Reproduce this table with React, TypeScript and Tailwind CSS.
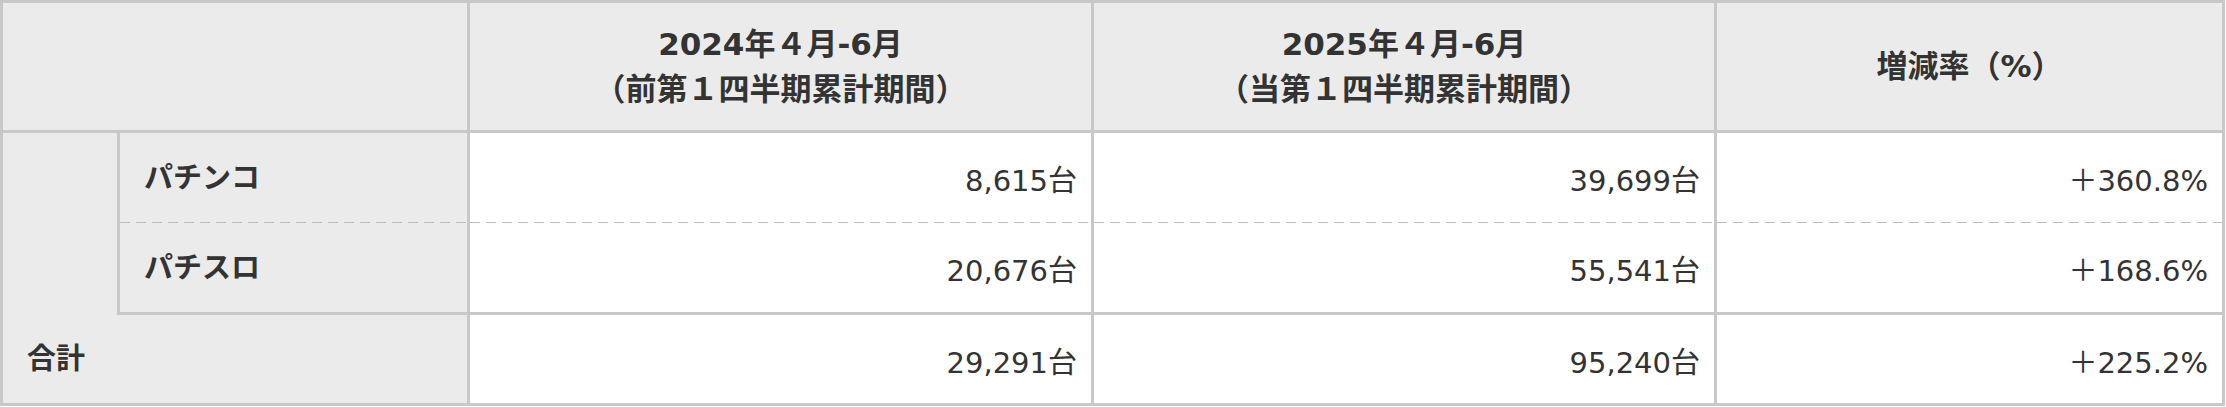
import React from "react";

const headCell =
  "flex flex-col items-center justify-center bg-[#ebebeb] border-r-[3px] border-b-[3px] border-[#c8c8c8] font-bold text-[31px] leading-[45px]";
const labelCell =
  "flex items-center bg-[#ebebeb] border-r-[3px] border-[#c8c8c8] font-bold text-[29px] pl-[24px] pt-[2px]";
const numCell =
  "flex items-center justify-end border-r-[3px] border-[#c8c8c8] text-[29px] pr-[14px] pt-[9px]";
const dashCell =
  "border-r-[3px] border-[#c8c8c8] bg-[image:repeating-linear-gradient(to_right,#bcbcbc_0px,#bcbcbc_10px,transparent_10px,transparent_16px)]";

const rows = [
  { label: "パチンコ", prev: "8,615台", cur: "39,699台", rate: "＋360.8%" },
  { label: "パチスロ", prev: "20,676台", cur: "55,541台", rate: "＋168.6%" },
];

export default function App() {
  return (
    <div className="w-[2226px] h-[407px] bg-white">
      <div className="grid w-[2225px] grid-cols-[117px_350px_624px_623px_508px] grid-rows-[130px_89px_1px_92px_91px] border-t-[3px] border-l-[3px] border-[#c8c8c8] text-[#333] font-['DejaVu_Sans','Noto_Sans_CJK_JP',sans-serif]">
        {/* header */}
        <div className="col-span-2 bg-[#ebebeb] border-r-[3px] border-b-[3px] border-[#c8c8c8]" />
        <div className={headCell}>
          <span>2024年４月-6月</span>
          <span>（前第１四半期累計期間）</span>
        </div>
        <div className={headCell}>
          <span>2025年４月-6月</span>
          <span>（当第１四半期累計期間）</span>
        </div>
        <div className={headCell}>
          <span>増減率（%）</span>
        </div>

        {/* パチンコ */}
        <div className="row-span-3 bg-[#ebebeb] border-r-[3px] border-[#c8c8c8]" />
        <div className={labelCell}>{rows[0].label}</div>
        <div className={numCell}>{rows[0].prev}</div>
        <div className={numCell}>{rows[0].cur}</div>
        <div className={numCell}>{rows[0].rate}</div>

        {/* dashed divider */}
        <div className={`${dashCell} bg-[#ebebeb]`} />
        <div className={dashCell} />
        <div className={dashCell} />
        <div className={dashCell} />

        {/* パチスロ */}
        <div className={`${labelCell} border-b-[3px]`}>{rows[1].label}</div>
        <div className={`${numCell} border-b-[3px]`}>{rows[1].prev}</div>
        <div className={`${numCell} border-b-[3px]`}>{rows[1].cur}</div>
        <div className={`${numCell} border-b-[3px]`}>{rows[1].rate}</div>

        {/* 合計 */}
        <div className={`${labelCell} col-span-2 border-b-[3px]`}>合計</div>
        <div className={`${numCell} border-b-[3px]`}>29,291台</div>
        <div className={`${numCell} border-b-[3px]`}>95,240台</div>
        <div className={`${numCell} border-b-[3px]`}>＋225.2%</div>
      </div>
    </div>
  );
}
